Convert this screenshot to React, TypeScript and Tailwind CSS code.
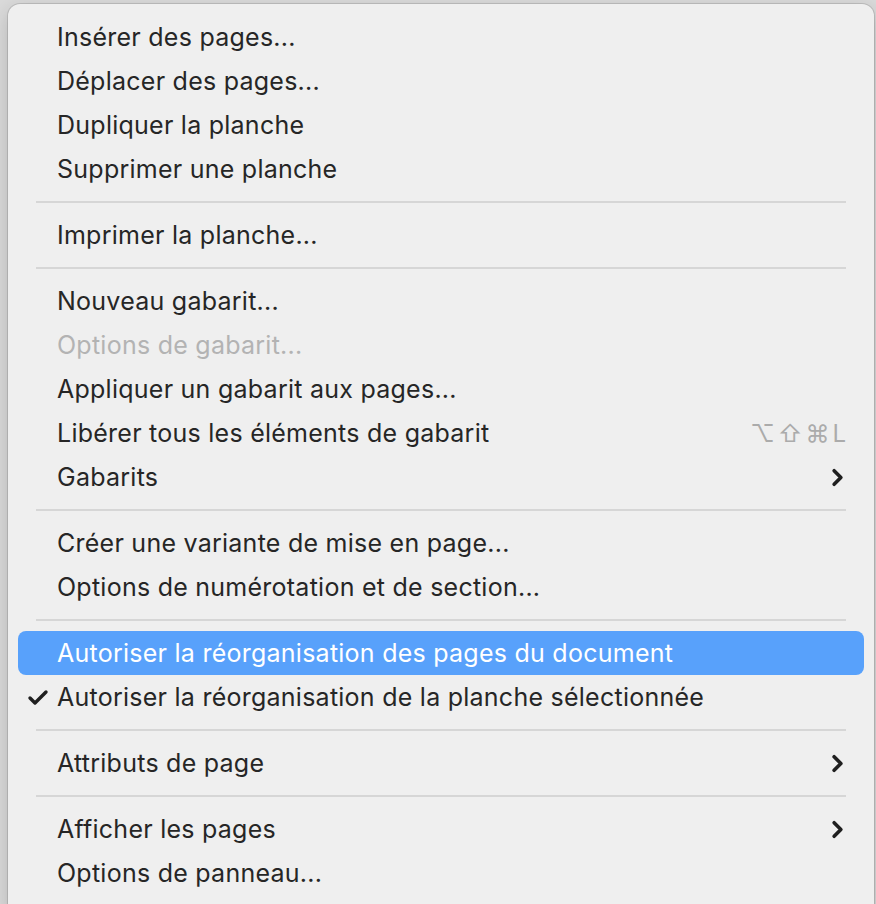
import { Check, ChevronRight } from "lucide-react";

type Item =
  | { sep: true }
  | {
      sep?: false;
      label: string;
      disabled?: boolean;
      active?: boolean;
      checked?: boolean;
      shortcut?: string;
      submenu?: boolean;
    };

const ITEMS: Item[] = [
  { label: "Insérer des pages..." },
  { label: "Déplacer des pages..." },
  { label: "Dupliquer la planche" },
  { label: "Supprimer une planche" },
  { sep: true },
  { label: "Imprimer la planche..." },
  { sep: true },
  { label: "Nouveau gabarit..." },
  { label: "Options de gabarit...", disabled: true },
  { label: "Appliquer un gabarit aux pages..." },
  { label: "Libérer tous les éléments de gabarit", shortcut: "⌥⇧⌘L" },
  { label: "Gabarits", submenu: true },
  { sep: true },
  { label: "Créer une variante de mise en page..." },
  { label: "Options de numérotation et de section..." },
  { sep: true },
  { label: "Autoriser la réorganisation des pages du document", active: true },
  { label: "Autoriser la réorganisation de la planche sélectionnée", checked: true },
  { sep: true },
  { label: "Attributs de page", submenu: true },
  { sep: true },
  { label: "Afficher les pages", submenu: true },
  { label: "Options de panneau..." },
];

export default function App() {
  return (
    <div
      className="w-[876px] h-[904px] overflow-hidden bg-[#dadada] pl-[8px] pt-[4px]"
      style={{ fontFamily: "Inter, 'Noto Sans', sans-serif" }}
    >
      <div className="w-[866px] h-[912px] rounded-[12px] bg-[#efefef] shadow-[0_0_0_1px_rgba(0,0,0,0.12),0_6px_20px_rgba(0,0,0,0.18)] px-[10px] pt-[11px]">
        {ITEMS.map((it, i) => {
          if (it.sep) {
            return (
              <div key={i} className="h-[22px] flex items-center px-[18px]">
                <div className="h-[2px] w-full bg-[#d6d6d6]" />
              </div>
            );
          }
          return (
            <div
              key={i}
              className={`h-[44px] flex items-center rounded-[8px] pr-[18px] pt-[1px] text-[25px] tracking-[0.25px] ${
                it.active
                  ? "bg-[#58a1fb] text-white"
                  : it.disabled
                  ? "text-[#b3b3b3]"
                  : "text-[#262626]"
              }`}
            >
              <span className="w-[39px] shrink-0 flex items-center pl-[8px]">
                {it.checked && (
                  <Check className="w-[24px] h-[24px] text-[#1f1f1f]" strokeWidth={3.4} />
                )}
              </span>
              <span className="flex-1 whitespace-nowrap">{it.label}</span>
              {it.shortcut && (
                <span className="text-[24px] text-[#ababab] tracking-[3px] -mr-[3px]">{it.shortcut}</span>
              )}
              {it.submenu && (
                <ChevronRight className="w-[27px] h-[27px] text-[#1f1f1f] -mr-[5px]" strokeWidth={3.2} />
              )}
            </div>
          );
        })}
      </div>
    </div>
  );
}
